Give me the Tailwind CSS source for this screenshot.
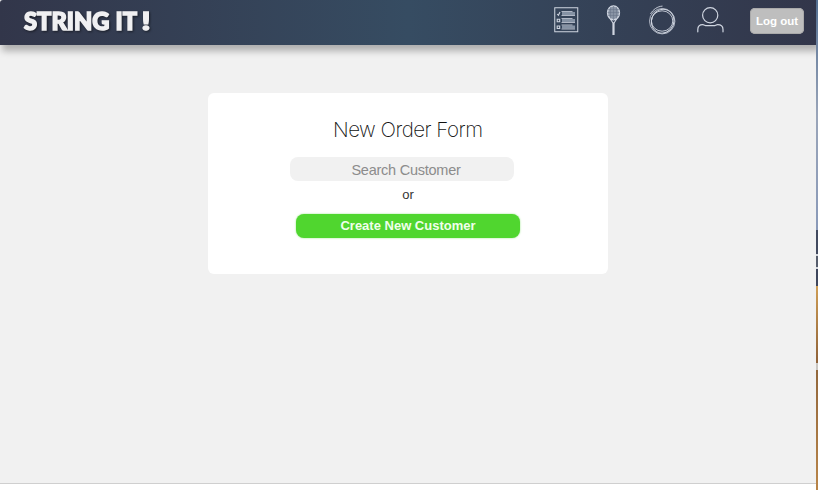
<!DOCTYPE html>
<html lang="en">
<head>
<meta charset="utf-8">
<title>String It!</title>
<script src="https://cdn.jsdelivr.net/npm/@tailwindcss/browser@4"></script>
</head>
<body class="flex h-[490px] w-[818px] overflow-hidden bg-white font-['Liberation_Sans',sans-serif]">
  <div class="flex w-[816px] flex-col overflow-hidden">
    <div class="flex h-[484px] flex-col border-b border-[#cfcfcf] bg-[#f1f1f1]">
      <header class="flex h-[45px] shrink-0 items-start justify-between rounded-tl-[3px] bg-linear-to-r from-[#32364a] via-[#364c62] to-[#32364a] pr-3 pl-[22px] shadow-[3px_5px_7px_1px_rgba(0,0,0,0.28)]">
        <svg class="mt-[6px] h-[30px] w-[132px] overflow-visible drop-shadow-[1px_1px_1px_rgba(0,0,0,0.5)]" viewBox="0 0 132 30" fill="#f0f0f2" stroke="#f0f0f2" stroke-width="1.5" font-family="Lato, sans-serif" font-weight="900" font-size="24.5">
          <text x="2" y="24" textLength="85.5" lengthAdjust="spacingAndGlyphs">STRING</text>
          <text x="93.5" y="24" textLength="21.5" lengthAdjust="spacingAndGlyphs">IT</text>
          <text x="119.5" y="24" textLength="9" lengthAdjust="spacingAndGlyphs">!</text>
        </svg>
        <nav class="flex items-start text-[#d0d6e1]">
          <svg class="mt-[7px] mr-[27px] h-[26px] w-[25px] translate-x-px" viewBox="0 0 25 26" fill="none" stroke="currentColor">
            <rect x=".75" y=".75" width="23" height="24" stroke-width="1"/>
            <path d="M3.2 7l1.2 1.3L6 5" stroke-width="1.1"/>
            <path d="M3.2 12.2h2.5v2.5H3.2zM3.2 19h2.5v2.5H3.2z" stroke-width="1.1"/>
            <path d="M8 6.5h13M8 13.4h13M8 20h13" stroke="#8592a4" stroke-width="3"/>
            <path d="M7.5 4.5h11M7.5 8.5h13.5M7.5 11.5h11M7.5 15.5h13.5M7.5 18h11M7.5 22h13.5" stroke-width=".8"/>
          </svg>
          <svg class="mt-[5px] mr-[28px] h-[31px] w-[15px] translate-x-px" viewBox="0 0 15 31" fill="none" stroke="currentColor">
            <ellipse cx="7.5" cy="7.8" rx="6" ry="7" fill="#8994a5" stroke-width="1.3"/>
            <path d="M4.5 2v12M7.5 1v14M10.5 2v12M2 4.5h11M1.5 7.5h12M2 10.5h11" stroke="#667387" stroke-width=".5"/>
            <path d="M4 13.5l3 4.5M11 13.5l-3 4.5" stroke-width="1.1"/>
            <path d="M7.5 17.5V30" stroke-width="2.2"/>
          </svg>
          <svg class="mt-[5px] mr-[20px] h-[30px] w-[29px]" viewBox="0 0 29 30" fill="none" stroke="currentColor">
            <circle cx="14.2" cy="16.2" r="12.7" stroke-width=".8"/>
            <ellipse cx="14.7" cy="16.2" rx="11.2" ry="12" stroke-width=".9" transform="rotate(25 14.7 16.2)"/>
            <ellipse cx="14.1" cy="16" rx="10.7" ry="10.2" stroke-width=".9"/>
            <path d="M2.5 9C5 4.5 9.5 1.4 14.5 1.1" stroke-width=".9"/>
          </svg>
          <svg class="mt-[7px] mr-[26px] h-[26px] w-[27px]" viewBox="0 0 27 26" fill="none" stroke="currentColor" stroke-width="1.2" stroke-linecap="round">
            <circle cx="13.2" cy="8.2" r="7.6"/>
            <path d="M.8 24.8v-2.2c0-3.2 2-4.9 5-4.9 1.4 0 2.2 1 3.7 1h7.4c1.5 0 2.2-1 3.7-1 3.1 0 5.4 1.7 5.4 4.9v2.2"/>
          </svg>
          <button class="mt-2 h-[26px] w-[54px] rounded-[5px] bg-[#bebebe] pt-px text-[11.5px] font-bold whitespace-nowrap text-white ring-1 ring-[#aaa] ring-inset">Log out</button>
        </nav>
      </header>
      <main class="mt-12 ml-[208px] flex h-[181px] w-[400px] flex-col items-center rounded-[6px] bg-white">
        <h1 class="mt-[24px] h-[28px] text-center">
          <svg class="h-[28px] w-[150px]" viewBox="0 0 150 28" fill="#111" font-family="Inter, sans-serif" font-size="20.5" font-weight="200"><text x="0" y="20" textLength="150">New Order Form</text></svg>
        </h1>
        <input class="mt-3 -ml-[12px] h-6 w-[224px] rounded-[8px] bg-[#f1f1f1] pt-[1px] pl-[8px] text-center text-[14.5px] tracking-[-0.25px] placeholder:text-[#8c8c8c]" placeholder="Search Customer">
        <p class="mt-1 h-[21px] text-[13px] leading-[20px] text-[#333]">or</p>
        <button class="mt-2 h-6 w-[224px] rounded-[8px] bg-[#50d62f] text-[13px] font-bold text-[#f0ffec] shadow-[0_0_2px_#8fe27c]">Create New Customer</button>
      </main>
    </div>
  </div>
  <aside class="flex w-[2px] flex-col">
    <div class="h-[230px] bg-linear-to-b from-[#536f91] via-[#9aa5b9] to-[#8999b8]"></div>
    <div class="h-[24px] bg-[#424a5f]"></div>
    <div class="h-[2px] bg-[#d5d8dd]"></div>
    <div class="h-[11px] bg-[#565d6c]"></div>
    <div class="h-[2px] bg-[#d5d8dd]"></div>
    <div class="h-[17px] bg-[#3e465c]"></div>
    <div class="h-[77px] bg-linear-to-b from-[#cf9e55] to-[#8e6138]"></div>
    <div class="h-[7px] bg-[#c9c6c2]"></div>
    <div class="h-[120px] bg-linear-to-b from-[#92673c] to-[#b98549]"></div>
  </aside>
</body>
</html>
